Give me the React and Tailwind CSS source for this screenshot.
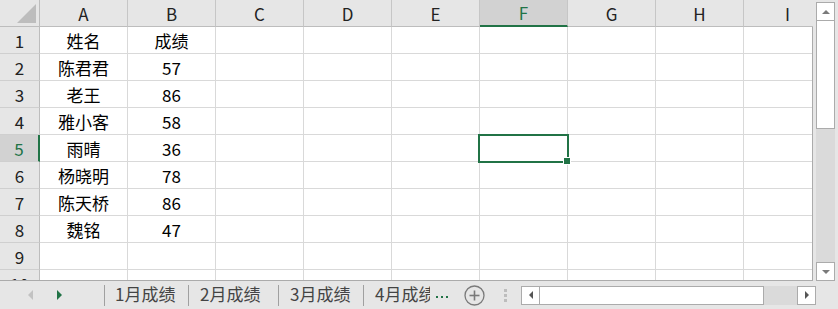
import React from "react";

const cols = ["A", "B", "C", "D", "E", "F", "G", "H", "I"];
const data = [
  ["姓名", "成绩"],
  ["陈君君", "57"],
  ["老王", "86"],
  ["雅小客", "58"],
  ["雨晴", "36"],
  ["杨晓明", "78"],
  ["陈天桥", "86"],
  ["魏铭", "47"],
  ["", ""],
  ["", ""],
];

function Tri({ dir, color, w = 5, h = 9 }) {
  let pts;
  if (dir === "left") pts = `${w},0 ${w},${h} 0,${h / 2}`;
  else if (dir === "right") pts = `0,0 0,${h} ${w},${h / 2}`;
  else if (dir === "up") pts = `0,${h} ${w},${h} ${w / 2},0`;
  else pts = `0,0 ${w},0 ${w / 2},${h}`;
  return (
    <svg width={w} height={h} viewBox={`0 0 ${w} ${h}`} className="block">
      <polygon points={pts} fill={color} />
    </svg>
  );
}

export default function App() {
  return (
    <div className="flex h-[309px] w-[838px] flex-col overflow-hidden bg-[#e6e6e6] font-['Noto_Sans_CJK_SC',sans-serif] text-[17px] text-[#111]">
      {/* top area */}
      <div className="flex h-[281px] shrink-0">
        {/* grid */}
        <div className="flex w-[813px] shrink-0 flex-col overflow-hidden">
          {/* header row */}
          <div className="flex h-[27px] shrink-0">
            <div className="w-[40px] shrink-0 border-b border-r border-[#bdbdbd] bg-[#e6e6e6]">
              <svg width="39" height="26" className="block">
                <polygon points="17,23 36,23 36,4" fill="#bdbdbd" />
              </svg>
            </div>
            {cols.map((c) =>
              c === "F" ? (
                <div
                  key={c}
                  className="flex w-[88px] shrink-0 items-center justify-center border-b-2 border-r border-b-[#217346] border-r-[#c6c6c6] bg-[#d2d2d2] leading-none text-[#217346]"
                >
                  {c}
                </div>
              ) : (
                <div
                  key={c}
                  className="flex w-[88px] shrink-0 items-center justify-center border-b border-r border-b-[#bdbdbd] border-r-[#c6c6c6] bg-[#e6e6e6] leading-none text-[#222]"
                >
                  {c}
                </div>
              )
            )}
          </div>
          {/* body */}
          <div className="flex flex-1 flex-col overflow-hidden border-b border-r border-[#ababab] bg-white">
            {data.map((row, ri) => {
              const sel = ri === 4;
              return (
                <div key={ri} className="flex h-[27px] shrink-0">
                  <div
                    className={
                      sel
                        ? "flex w-[40px] shrink-0 items-center justify-center border-b border-r-2 border-b-[#cfcfcf] border-r-[#217346] bg-[#d2d2d2] leading-none text-[#217346]"
                        : "flex w-[40px] shrink-0 items-center justify-center border-b border-r border-b-[#cfcfcf] border-r-[#bdbdbd] bg-[#e6e6e6] leading-none text-[#222]"
                    }
                  >
                    {ri + 1}
                  </div>
                  {cols.map((c, ci) => (
                    <div
                      key={c}
                      className="relative flex w-[88px] shrink-0 items-center justify-center border-b border-r border-[#d9d9d9] leading-none text-black"
                    >
                      {ci === 0 ? row[0] : ci === 1 ? row[1] : ""}
                      {sel && c === "F" && (
                        <>
                          <div className="pointer-events-none absolute left-[-2px] top-[-1px] z-10 h-[29px] w-[91px] border-2 border-[#217346]" />
                          <div className="pointer-events-none absolute left-[83px] top-[22px] z-20 h-[8px] w-[8px] border border-white bg-[#217346]" />
                        </>
                      )}
                    </div>
                  ))}
                </div>
              );
            })}
          </div>
        </div>
        {/* vertical scrollbar */}
        <div className="flex w-[25px] shrink-0 flex-col pl-[3px] pr-[3px] pt-[2px]">
          <div className="flex h-[19px] w-[19px] shrink-0 items-center justify-center border border-[#ababab] bg-white">
            <Tri dir="up" color="#7a7a7a" w={8} h={4} />
          </div>
          <div className="h-[108px] w-[19px] shrink-0 border border-t-0 border-[#ababab] bg-white" />
          <div className="w-[19px] flex-1 bg-[#dadada]" />
          <div className="flex h-[19px] w-[19px] shrink-0 items-center justify-center border border-[#ababab] bg-white">
            <Tri dir="down" color="#7a7a7a" w={8} h={4} />
          </div>
        </div>
      </div>

      {/* bottom sheet tab bar */}
      <div className="flex h-[28px] shrink-0 items-center text-[#444]">
        <div className="flex w-[104px] shrink-0 items-center gap-[24px] pl-[28px]">
          <Tri dir="left" color="#c2c2c2" w={5} h={10} />
          <Tri dir="right" color="#217346" w={5} h={10} />
        </div>
        <div className="h-[21px] w-px shrink-0 bg-[#a0a0a0]" />
        <div className="w-[83px] shrink-0 pb-[3px] pl-[10px] leading-none">1月成绩</div>
        <div className="h-[21px] w-px shrink-0 bg-[#a0a0a0]" />
        <div className="w-[89px] shrink-0 pb-[3px] pl-[11px] leading-none">2月成绩</div>
        <div className="h-[21px] w-px shrink-0 bg-[#a0a0a0]" />
        <div className="w-[84px] shrink-0 pb-[3px] pl-[11px] leading-none">3月成绩</div>
        <div className="h-[21px] w-px shrink-0 bg-[#a0a0a0]" />
        <div className="w-[66px] shrink-0 overflow-hidden whitespace-nowrap pb-[3px] pl-[11px] leading-none">4月成绩</div>
        <div className="ml-[6px] flex shrink-0 items-center gap-[3px] pt-[3px]">
          <span className="block h-[2px] w-[2px] bg-[#217346]" />
          <span className="block h-[2px] w-[2px] bg-[#217346]" />
          <span className="block h-[2px] w-[2px] bg-[#217346]" />
        </div>
        <svg width="21" height="21" viewBox="0 0 21 21" className="ml-[16px] block shrink-0">
          <circle cx="10.5" cy="10.5" r="9.5" fill="none" stroke="#7a7a7a" strokeWidth="1.3" />
          <line x1="10.5" y1="5.5" x2="10.5" y2="15.5" stroke="#7a7a7a" strokeWidth="1.6" />
          <line x1="5.5" y1="10.5" x2="15.5" y2="10.5" stroke="#7a7a7a" strokeWidth="1.6" />
        </svg>
        <div className="ml-[19px] flex shrink-0 flex-col gap-[2px]">
          <span className="block h-[3px] w-[3px] bg-[#bdbdbd]" />
          <span className="block h-[3px] w-[3px] bg-[#bdbdbd]" />
          <span className="block h-[3px] w-[3px] bg-[#bdbdbd]" />
        </div>
        <div className="ml-[14px] flex h-[19px] w-[295px] shrink-0">
          <div className="flex w-[19px] shrink-0 items-center justify-center border border-[#ababab] bg-white">
            <Tri dir="left" color="#555" w={4} h={8} />
          </div>
          <div className="w-[224px] shrink-0 border border-l-0 border-[#ababab] bg-white" />
          <div className="flex-1 bg-[#dadada]" />
          <div className="flex w-[19px] shrink-0 items-center justify-center border border-[#ababab] bg-white">
            <Tri dir="right" color="#555" w={4} h={8} />
          </div>
        </div>
      </div>
    </div>
  );
}
